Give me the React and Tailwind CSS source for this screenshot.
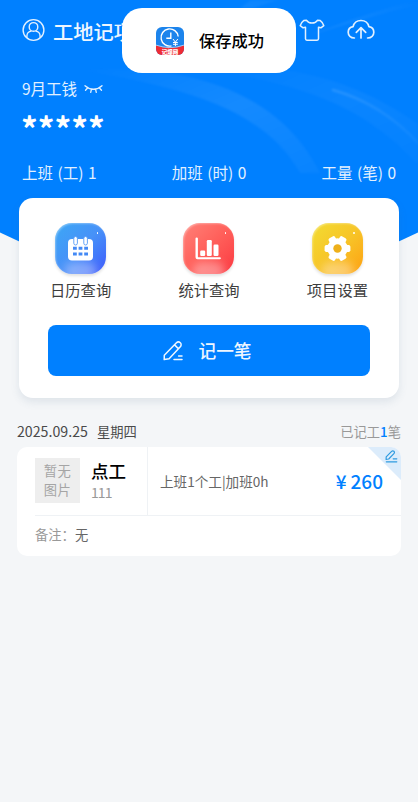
import React from "react";

const stats = [
  { label: "上班 (工)", value: 1 },
  { label: "加班 (时)", value: 0 },
  { label: "工量 (笔)", value: 0 },
];

const UserIcon = () => (
  <svg width="24" height="24" viewBox="0 0 24 24" fill="none" stroke="#e2f0ff" strokeWidth="1.4">
    <circle cx="11.5" cy="12" r="10.4" />
    <circle cx="11.5" cy="8.9" r="4.3" />
    <path d="M4.900 19.800v-1.600c0-3.200 2.100-4.900 4.600-5.100M18.100 19.800v-1.600c0-3.200-2.100-4.900-4.600-5.100" />
  </svg>
);

const ShirtIcon = () => (
  <svg width="26" height="24" viewBox="0 0 26 24" fill="none" stroke="#e2f0ff" strokeWidth="1.5" strokeLinejoin="round">
    <path d="M7.6 2.300C8.700 4.200 10.500 5 13 5s4.300-.8 5.400-2.700L21.300 2.600c1.800 1.300 3 3.100 3.500 5l-2.900 2.200-2.400-.6v11.600c0 .9-.5 1.400-1.400 1.400H7.900c-.9 0-1.400-.5-1.400-1.400V9.200l-2.400.6-2.900-2.200c.5-1.900 1.700-3.700 3.500-5z" />
  </svg>
);

const CloudIcon = () => (
  <svg width="28" height="22" viewBox="0 0 28 22" fill="none" stroke="#e2f0ff" strokeWidth="1.7" strokeLinecap="round" strokeLinejoin="round">
    <path d="M7.400 19C3.700 18.800 1.200 16.500 1.200 13.300c0-3 2-5.200 4.900-5.700C7 3.900 10 1.500 14 1.500s7 2.400 7.900 6.100c2.900.5 4.900 2.700 4.900 5.700 0 3.200-2.500 5.500-6.200 5.700" />
    <path d="M14 19V9M9.300 13.400L14 8.700l4.700 4.700" />
  </svg>
);

const EyeClosedIcon = () => (
  <svg width="19" height="10" viewBox="0 0 19 10" fill="none" stroke="#e2f0ff" strokeWidth="1.300" strokeLinecap="round">
    <path d="M1 1.800c5 4.600 12 4.600 17 0M3.600 4L1.500 6.300M7.400 5.500L6.700 8.400M11.600 5.500l.7 2.900M15.400 4l2.100 2.300" />
  </svg>
);

const PencilIcon = () => (
  <svg width="20" height="20" viewBox="0 0 20 20" fill="none" stroke="currentColor" strokeWidth="1.500" strokeLinecap="round" strokeLinejoin="round">
    <path d="M1.300 14.300L13.200 2c1.300-1.300 3-1.300 4.100-.3s1.100 2.900 0 4.100L6.100 17.700l-4.900.9zM11.600 3.900l3.700 3.700" />
    <path d="M11 18.600h8M15.600 14.900H19" />
  </svg>
);

const EditIcon = () => (
  <svg width="13" height="13" viewBox="0 0 13 13" fill="none" stroke="currentColor" strokeWidth="1.200" strokeLinecap="round" strokeLinejoin="round">
    <path d="M1.200 6.800L6.600 1.400c.7-.7 1.600-.7 2.300-.1s.7 1.600 0 2.300L3.700 9l-2.600.4zM8.200 8.800h3.600M1.300 11.800h10.500" />
  </svg>
);

const AppLogo = () => (
  <svg width="28" height="28" viewBox="0 0 28 28">
    <clipPath id="logo">
      <rect width="28" height="28" rx="6" />
    </clipPath>
    <g clipPath="url(#logo)">
      <rect width="28" height="28" fill="#1c84ec" />
      <path d="M0 18.500q14 5 28 0V28H0z" fill="#ee2c35" />
      <path d="M0 18.100q14 5 28 0" fill="none" stroke="white" strokeWidth=".6" />
      <path d="M15.500 18.900A8.600 8.600 0 1 1 22.200 9.500" fill="none" stroke="white" strokeWidth="1.400" />
      <path d="M14.800 5.500v5.800h-4.500" fill="none" stroke="white" strokeWidth="1.400" />
      <path d="M17 12l2.400 3.200L21.800 12M19.400 15v4M17 15.500h4.800M17 17.300h4.800" fill="none" stroke="white" strokeWidth="1" />
      <text x="14" y="26.700" textAnchor="middle" fontSize="5.500" fontWeight="900" fill="white">记爆网</text>
    </g>
  </svg>
);

// All three tile glyphs are drawn on the same 51px square.
const CalendarGlyph = () => (
  <svg width="51" height="51" viewBox="0 0 51 51">
    <rect x="13" y="16" width="25" height="21.500" rx="4" fill="white" />
    <rect x="18.800" y="13.500" width="3.600" height="8.500" rx="1.800" fill="white" stroke="#5299f6" strokeWidth=".9" />
    <rect x="28.800" y="13.500" width="3.600" height="8.500" rx="1.800" fill="white" stroke="#5299f6" strokeWidth=".9" />
    <path d="M18 25.300h3.800M23.600 25.300h3.800M29.200 25.300H33M18 31h3.800M23.600 31h3.800M29.200 31H33" stroke="#4389f5" strokeWidth="2.900" />
  </svg>
);

const ChartGlyph = () => (
  <svg width="51" height="51" viewBox="0 0 51 51" fill="white">
    <path d="M12.500 15.500q0-1 1.200-1t1.200 1v18.700h21.800q1.200 0 1.200 1t-1.200 1H14.500q-2 0-2-2z" />
    <rect x="17.200" y="27.500" width="5" height="5.500" rx="1.200" />
    <rect x="23.800" y="17" width="5" height="16" rx="1.200" />
    <rect x="30.500" y="21.500" width="5" height="11.500" rx="1.200" />
  </svg>
);

const GearGlyph = () => (
  <svg width="51" height="51" viewBox="0 0 51 51">
    <g fill="white">
      <circle cx="25.500" cy="25.500" r="10.200" />
      {[30, 90, 150].map((deg) => (
        <rect key={deg} x="21.900" y="12.600" width="7.200" height="25.800" rx="1.800" transform={`rotate(${deg} 25.500 25.500)`} />
      ))}
    </g>
    <circle cx="25.500" cy="25.500" r="4.200" fill="#eeb01a" />
  </svg>
);

const shortcuts = [
  { label: "日历查询", Glyph: CalendarGlyph, tile: "from-[#3ba8f5] via-[#4791f8] to-[#4056fb]" },
  { label: "统计查询", Glyph: ChartGlyph, tile: "from-[#ff8078] via-[#ff5f5a] to-[#fb3540]" },
  { label: "项目设置", Glyph: GearGlyph, tile: "from-[#f2dc32] via-[#f7c528] to-[#fda00f]" },
];

const HeaderBackground = () => (
  <svg className="absolute inset-x-0 top-0" width="418" height="330" viewBox="0 0 418 330">
    <defs>
      <linearGradient id="streak" x1="0" x2="1" y1="0" y2="1">
        <stop offset="0" stopColor="white" stopOpacity="0" />
        <stop offset=".5" stopColor="white" stopOpacity=".08" />
        <stop offset="1" stopColor="white" stopOpacity=".03" />
      </linearGradient>
      <linearGradient id="beam" x1="0" x2="1" y1="1" y2="0">
        <stop offset="0" stopColor="white" stopOpacity=".1" />
        <stop offset="1" stopColor="white" stopOpacity="0" />
      </linearGradient>
      <linearGradient id="tail" x1="0" x2="1">
        <stop offset="0" stopColor="white" stopOpacity=".12" />
        <stop offset="1" stopColor="white" stopOpacity=".04" />
      </linearGradient>
      <filter id="soften">
        <feGaussianBlur stdDeviation="1.2" />
      </filter>
    </defs>
    <path d="M0 0h418v232.500L209 330 0 232.500z" fill="#0080ff" />
    <g filter="url(#soften)">
      <path d="M80 70C190 63 280 92 320 173L300 173C265 111 190 88 80 70z" fill="url(#streak)" />
      <path d="M200 69C300 58 370 90 418 124V165C360 100 290 82 200 69z" fill="url(#streak)" opacity=".5" />
      <path d="M333 90C365 99 395 118 418 143" fill="none" stroke="url(#tail)" strokeWidth="2.500" strokeLinecap="round" />
      <path d="M240 8L251 0h27l-25 8zM310 35C345 22 376 10 418 0v5C378 14 345 25 310 35z" fill="url(#beam)" />
    </g>
  </svg>
);

export default function App() {
  return (
    <div className="relative h-[802px] w-[418px] overflow-hidden bg-[#f4f6f8] font-['Noto_Sans_CJK_SC',sans-serif]">
      <HeaderBackground />

      <div className="relative">
        <header className="h-[198px] px-[22px] pt-[18px] text-white">
          <div className="flex h-6 items-center">
            <UserIcon />
            <h1 className="mt-0.5 ml-[7px] text-[20.300px] leading-6 font-medium whitespace-nowrap text-[#eef6ff]">工地记项</h1>
            <div className="ml-auto flex items-center gap-[22px] pr-[21px]">
              <ShirtIcon />
              <CloudIcon />
            </div>
          </div>

          <div className="mt-[35px] flex h-6 items-center gap-[7px] text-[15.500px] text-[#e2f0ff]">
            <span>9月工钱</span>
            <EyeClosedIcon />
          </div>
          <div className="mt-[9px] -ml-px h-[30px] text-[33px] leading-[36px] font-bold">*****</div>

          <div className="mt-[21px] flex h-6 items-center justify-between text-[15.500px] text-[#e2f0ff] [word-spacing:1px]">
            {stats.map((item) => (
              <span key={item.label}>
                {item.label} {item.value}
              </span>
            ))}
          </div>
        </header>

        <section className="mx-[19px] h-[200px] rounded-[14px] bg-white pt-[25px] shadow-[0_4px_8px_rgba(80,110,140,0.13)]">
          <div className="flex justify-between px-[31px]">
            {shortcuts.map(({ label, Glyph, tile }) => (
              <div key={label} className="flex flex-col items-center">
                <div className={`relative h-[51px] w-[51px] overflow-hidden rounded-[17px] bg-linear-to-br shadow-[0_2px_3px_rgba(0,0,0,0.12),inset_1px_1px_2px_rgba(255,255,255,0.35)] ${tile}`}>
                  <div className="absolute bottom-[-8px] left-[9px] h-5 w-[33px] rounded-full bg-white/35 blur-[4px]" />
                  <div className="absolute top-[9px] right-2 h-[1.500px] w-[1.500px] rounded-full bg-white" />
                  <div className="relative">
                    <Glyph />
                  </div>
                </div>
                <span className="mt-[3px] text-[15.300px] leading-6 text-[#3d3d3d]">{label}</span>
              </div>
            ))}
          </div>
          <button className="mt-6 ml-[29px] flex h-[51px] w-[322px] items-center justify-center gap-[15px] rounded-lg bg-[#0080ff] pr-[3px] text-[17.700px] font-medium text-[#eef6ff]">
            <PencilIcon />
            <span>记一笔</span>
          </button>
        </section>

        <div className="mt-[22px] flex h-6 items-center justify-between px-[17px] text-[13.300px]">
          <span className="text-[#4a4a4a]">
            <span className="text-[14.200px]">2025.09.25</span>
            <span className="ml-[9px]">星期四</span>
          </span>
          <span className="text-[#999]">
            已记工<b className="font-medium text-[#0080ff]">1</b>笔
          </span>
        </div>

        <article className="relative mx-[17px] mt-[3px] h-[109px] overflow-hidden rounded-[10px] bg-white">
          <div className="flex h-[68px]">
            <div className="flex w-[131px] border-r border-[#eff2f5] pt-[11px] pl-[18px]">
              <div className="h-[45px] w-[45px] bg-[#eee] pt-[4px] text-center text-[13.300px] leading-[18.500px] tracking-[0.500px] text-[#a5a5a5]">
                暂无
                <br />
                图片
              </div>
              <div className="ml-[11px]">
                <div className="text-[17.500px] leading-[26px] font-medium text-black">点工</div>
                <div className="text-[14px] leading-4 tracking-[-0.900px] text-[#999]">111</div>
              </div>
            </div>
            <div className="flex flex-1 items-center justify-between pr-[18px] pl-3">
              <span className="text-[13.600px] text-[#666]">上班1个工|加班0h</span>
              <span className="text-[19px] font-medium text-[#0080ff]">
                ¥<span className="ml-1">260</span>
              </span>
            </div>
          </div>
          <div className="ml-[18px] border-t border-[#eff2f5] text-[13.300px] leading-[37px] text-[#999]">
            备注：<span className="text-[#666]">无</span>
          </div>
          <div className="absolute top-0 right-0 flex h-[33px] w-[33px] items-start justify-end bg-[#dcecfb] pt-[3px] pr-[3px] text-[#2f9be0] [clip-path:polygon(0_0,100%_0,100%_100%)]">
            <EditIcon />
          </div>
        </article>
      </div>

      <div className="absolute top-2 left-[122px] flex h-[65px] w-[174px] items-center rounded-[20px] bg-white pl-[34px]">
        <AppLogo />
        <span className="ml-[15px] text-[16.300px] font-medium text-black">保存成功</span>
      </div>
    </div>
  );
}
